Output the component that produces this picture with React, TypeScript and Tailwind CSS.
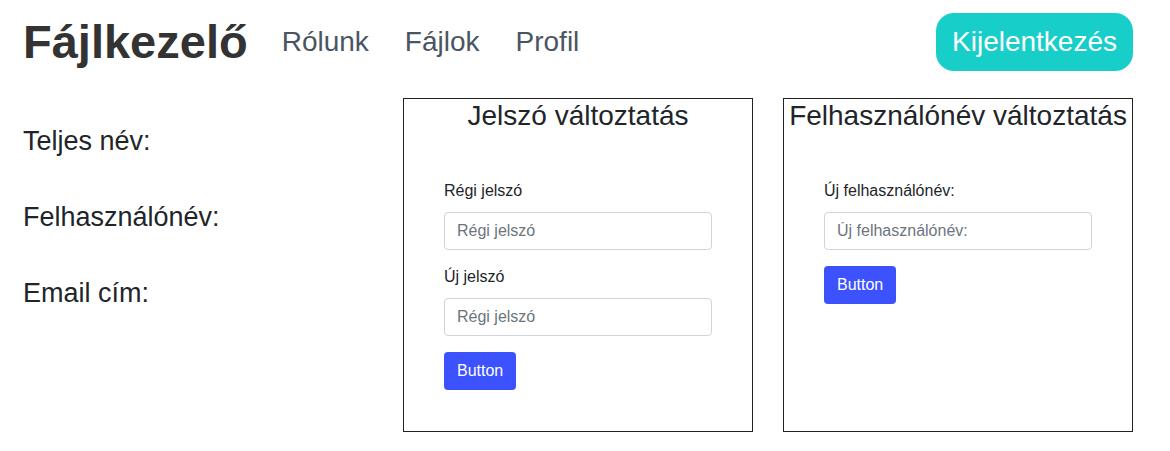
import React from 'react';

const font = { fontFamily: '"Liberation Sans", Arial, sans-serif' };

export default function App() {
  return (
    <div className="min-h-[451px] bg-white text-[#212529]" style={font}>
      <header className="flex items-center justify-between pl-[23px] pr-[37px] pt-[13px]">
        <nav className="flex items-center gap-[36px]">
          <h1 className="text-[47px] font-bold text-[#333333] leading-[58px] mr-[-2px]">Fájlkezelő</h1>
          <a className="text-[28px] text-[#4a5562]">Rólunk</a>
          <a className="text-[28px] text-[#4a5562]">Fájlok</a>
          <a className="text-[28px] text-[#4a5562]">Profil</a>
        </nav>
        <button className="h-[58px] px-[16px] rounded-[18px] bg-[#17cfc8] text-white text-[28px]">
          Kijelentkezés
        </button>
      </header>

      <main className="flex items-start mt-[27px]">
        <div className="w-[403px] flex flex-col gap-[42px] pl-[23px] pt-[26px] text-[27px] leading-[34px]">
          <p>Teljes név:</p>
          <p>Felhasználónév:</p>
          <p>Email cím:</p>
        </div>

        <div className="flex gap-[30px]">
          <Card title="Jelszó változtatás">
            <Field label="Régi jelszó" placeholder="Régi jelszó" />
            <Field label="Új jelszó" placeholder="Régi jelszó" />
            <Button />
          </Card>
          <Card title="Felhasználónév változtatás">
            <Field label="Új felhasználónév:" placeholder="Új felhasználónév:" />
            <Button />
          </Card>
        </div>
      </main>
    </div>
  );
}

function Card({ title, children }: { title: string; children: React.ReactNode }) {
  return (
    <div className="w-[350px] h-[334px] border border-[#222222]">
      <h3 className="text-center text-[28px] leading-[34px] whitespace-nowrap">{title}</h3>
      <div className="px-[40px] pt-[46px]">{children}</div>
    </div>
  );
}

function Field({ label, placeholder }: { label: string; placeholder: string }) {
  return (
    <div className="mb-[15px]">
      <label className="block text-[16px] leading-[24px] mb-[9px]">{label}</label>
      <input
        placeholder={placeholder}
        className="w-[268px] h-[38px] px-[12px] text-[16px] border border-[#ced4da] rounded-[4px] placeholder:text-[#6c757d] outline-none"
        style={font}
      />
    </div>
  );
}

function Button() {
  return (
    <button className="mt-[1px] h-[38px] px-[13px] rounded-[4px] bg-[#3d52ff] text-white text-[16px]">
      Button
    </button>
  );
}
